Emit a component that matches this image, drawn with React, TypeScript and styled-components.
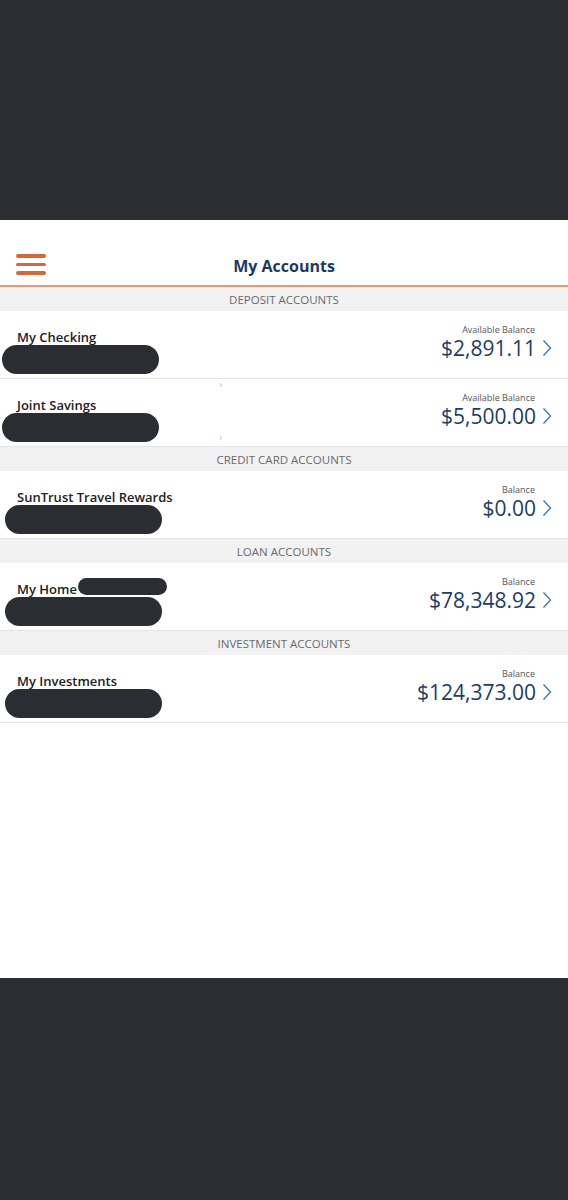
import React from "react";
import styled, { createGlobalStyle } from "styled-components";

const GlobalStyle = createGlobalStyle`
  body {
    margin: 0;
    background: #2a2e33;
    font-family: "Open Sans", "Liberation Sans", sans-serif;
  }
`;

type Account = {
  name: string;
  caption: string;
  amount: string;
  inlineMask?: boolean;
  pillLeft?: number;
  ghost?: boolean;
};

type Group = { title: string; accounts: Account[] };

const groups: Group[] = [
  {
    title: "Deposit Accounts",
    accounts: [
      { name: "My Checking", caption: "Available Balance", amount: "$2,891.11", pillLeft: 2 },
      { name: "Joint Savings", caption: "Available Balance", amount: "$5,500.00", pillLeft: 2, ghost: true },
    ],
  },
  {
    title: "Credit Card Accounts",
    accounts: [{ name: "SunTrust Travel Rewards", caption: "Balance", amount: "$0.00" }],
  },
  {
    title: "Loan Accounts",
    accounts: [{ name: "My Home", caption: "Balance", amount: "$78,348.92", inlineMask: true }],
  },
  {
    title: "Investment Accounts",
    accounts: [{ name: "My Investments", caption: "Balance", amount: "$124,373.00" }],
  },
];

const App = () => {
  return (
    <>
      <GlobalStyle />
      <Band />
      <Screen>
        <Header>
          <Burger>
            <span />
            <span />
            <span />
          </Burger>
          <Title>My Accounts</Title>
        </Header>
        {groups.map((g) => (
          <section key={g.title}>
            <SectionTitle>{g.title}</SectionTitle>
            {g.accounts.map((a) => (
              <Row key={a.name}>
                <Left>
                  <Name>
                    {a.name}
                    {a.inlineMask && <SmallMask />}
                  </Name>
                  <Mask $left={a.pillLeft ?? 5} />
                </Left>
                <Right>
                  <Caption>{a.caption}</Caption>
                  <Amount>{a.amount}</Amount>
                </Right>
                <Chevron width="10" height="18" viewBox="0 0 10 18">
                  <polyline points="1.5,1.5 8.5,9 1.5,16.5" fill="none" stroke="#3d7cad" strokeWidth="1.4" />
                </Chevron>
                {a.ghost && (
                  <>
                    <Ghost $top={-3}>›</Ghost>
                    <Ghost $top={50}>›</Ghost>
                  </>
                )}
              </Row>
            ))}
          </section>
        ))}
      </Screen>
      <Band />
    </>
  );
};

export default App;

const Band = styled.div`
  height: 220px;
  background: #2a2e33;
`;

const Screen = styled.div`
  height: 758px;
  background: #ffffff;
`;

const Header = styled.header`
  height: 65px;
  border-bottom: 2px solid #e39878;
  display: flex;
  align-items: center;
  justify-content: center;
  position: relative;
`;

const Burger = styled.div`
  position: absolute;
  left: 16px;
  top: 34px;
  width: 30px;
  display: flex;
  flex-direction: column;
  gap: 5px;

  span {
    display: block;
    height: 3.5px;
    border-radius: 2px;
    background: #d2693b;
  }
`;

const Title = styled.h1`
  margin: 26px 0 0;
  font-size: 16px;
  font-weight: 700;
  color: #1c3a60;
`;

const SectionTitle = styled.div`
  height: 24px;
  background: #f2f2f2;
  display: flex;
  align-items: center;
  justify-content: center;
  font-size: 11.5px;
  text-transform: uppercase;
  color: #6a6a6a;
`;

const Row = styled.div`
  position: relative;
  height: 67px;
  border-bottom: 1px solid #e4e4e4;
  display: flex;
  align-items: flex-start;
`;

const Left = styled.div`
  flex: 1;
  padding-top: 16px;
  display: flex;
  flex-direction: column;
`;

const Name = styled.div`
  display: flex;
  align-items: center;
  padding-left: 17px;
  height: 20px;
  font-size: 13px;
  font-weight: 600;
  color: #222;
`;

const SmallMask = styled.span`
  display: inline-block;
  width: 89px;
  height: 17px;
  border-radius: 9px;
  background: #2a2e33;
  margin-left: 1px;
  margin-top: -6px;
`;

const Mask = styled.div<{ $left: number }>`
  margin-left: ${(p) => p.$left}px;
  margin-top: -2px;
  width: 157px;
  height: 29px;
  border-radius: 15px;
  background: #2a2e33;
`;

const Right = styled.div`
  padding-top: 13px;
  display: flex;
  flex-direction: column;
  align-items: flex-end;
`;

const Caption = styled.div`
  font-size: 9px;
  line-height: 11px;
  color: #555;
  margin-right: 1px;
`;

const Amount = styled.div`
  font-size: 21px;
  line-height: 26px;
  color: #1d3c68;
`;

const Chevron = styled.svg`
  margin: 28px 16px 0 6px;
`;

const Ghost = styled.span<{ $top: number }>`
  position: absolute;
  left: 219px;
  top: ${(p) => p.$top}px;
  font-size: 11px;
  color: #c8c8c8;
`;
